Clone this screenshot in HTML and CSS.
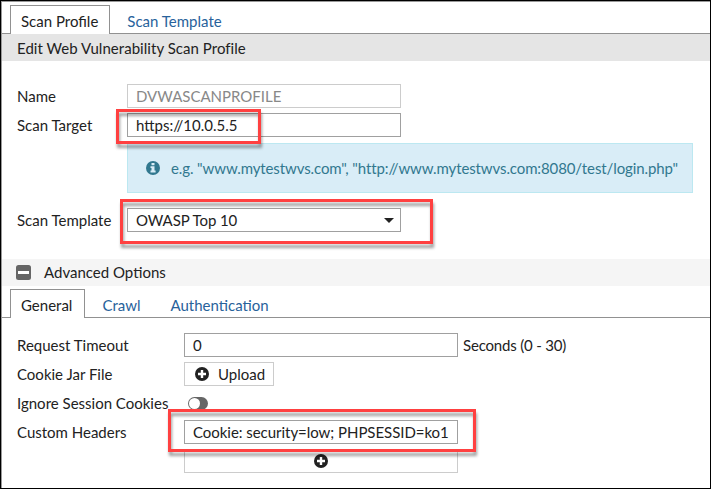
FILE: index.html
```html
<!DOCTYPE html>
<html lang="en">
<head>
<meta charset="utf-8">
<title>Edit Web Vulnerability Scan Profile</title>
<link rel="stylesheet" href="styles.css">
</head>
<body>
<main class="page">
  <nav class="tabs tabs-main">
    <a class="tab active">Scan Profile</a>
    <a class="tab">Scan Template</a>
  </nav>
  <h1 class="band title">Edit Web Vulnerability Scan Profile</h1>
  <section class="form profile">
    <div class="row"><label>Name</label><div class="field disabled">DVWASCANPROFILE</div></div>
    <div class="row"><label>Scan Target</label><div class="field">https://10.0.5.5</div><span class="mark mark-target"></span></div>
    <div class="hint">
      <svg class="icon" viewBox="0 0 14 14"><circle cx="7" cy="7" r="7" fill="#31788f"/><path d="M5.5 2h3v2.2h-3zM4.5 5.3h4v4.3h1.1v1.8H4.5V9.6h1V7.1h-1z" fill="#d9edf7"/></svg>
      <span>e.g. "www.mytestwvs.com", "http://www.mytestwvs.com:8080/test/login.php"</span>
    </div>
    <div class="row"><label>Scan Template</label><div class="field select">OWASP Top 10<i class="caret"></i></div><span class="mark mark-template"></span></div>
  </section>
  <h2 class="band advanced">
    <svg viewBox="0 0 15 15"><rect width="15" height="15" rx="2.5" fill="#666"/><path d="M2 6h11v3H2z" fill="#fff"/></svg>
    Advanced Options
  </h2>
  <nav class="tabs tabs-sub">
    <a class="tab active">General</a>
    <a class="tab">Crawl</a>
    <a class="tab">Authentication</a>
  </nav>
  <section class="form general">
    <div class="row"><label>Request Timeout</label><div class="field">0</div><span class="unit">Seconds (0 - 30)</span></div>
    <div class="row"><label>Cookie Jar File</label><div class="button upload"><svg class="icon" viewBox="0 0 14 14"><circle cx="7" cy="7" r="7" fill="#222"/><path d="M5.8 3h2.4v2.8H11v2.4H8.2V11H5.8V8.2H3V5.8h2.8z" fill="#fff"/></svg>Upload</div></div>
    <div class="row"><label>Ignore Session Cookies</label><svg class="toggle" viewBox="0 0 20 13"><rect width="20" height="13" rx="6.5" fill="#666"/><circle cx="6.5" cy="6.5" r="5.5" fill="#fff"/></svg></div>
    <div class="row"><label>Custom Headers</label><div class="field cookie">Cookie: security=low; PHPSESSID=ko1</div><span class="mark mark-headers"></span></div>
    <div class="row"><label></label><div class="button add"><svg class="icon" viewBox="0 0 14 14"><circle cx="7" cy="7" r="7" fill="#222"/><path d="M5.8 3h2.4v2.8H11v2.4H8.2V11H5.8V8.2H3V5.8h2.8z" fill="#fff"/></svg></div></div>
  </section>
</main>
</body>
</html>
```
FILE: styles.css
```css
* { box-sizing: border-box; }
body { margin: 0; font: 15px/24px Lato, "Liberation Sans", sans-serif; color: #222; }
.page { height: 489px; border: 1px solid #000; box-shadow: inset 1px 1px #999; padding: 1px 0 0 1px; overflow: hidden; background: #fff; }
.tabs { display: flex; align-items: flex-end; padding-left: 8px; border-bottom: 1px solid #919191; }
.tabs-main { height: 32px; }
.tabs-sub { height: 32px; }
.tab { height: 28px; padding: 3px 11px 0 10px; border: 1px solid transparent; border-bottom: 0; color: #28629b; white-space: nowrap; margin-right: 6px; }
.tabs-sub .tab { padding-right: 12px; }
.tab.active { height: 29px; margin-bottom: -1px; border-color: #919191; background: #fff; color: #222; }
.band { margin: 0; font-size: 15px; font-weight: 400; line-height: 27px; height: 27px; padding-left: 15px; }
.title { background: #e5e5e5; padding-top: 1px; letter-spacing: 0.04px; }
.advanced { display: flex; align-items: center; background: #f5f5f5; gap: 13px; padding-left: 14px; margin-top: 27px; }
.advanced svg { width: 15px; height: 15px; }
.form { display: flex; flex-direction: column; gap: 5px; padding-left: 15px; }
.profile { padding-top: 23px; }
.general { padding-top: 15px; }
.row { display: flex; height: 24px; position: relative; white-space: nowrap; }
.row label { width: 110px; flex: none; }
.general label { width: 167px; }
.field { width: 274px; height: 24px; border: 1px solid #a0a0a0; padding-left: 8px; line-height: 22px; background: #fff; overflow: hidden; }
.disabled { border-color: #ccc; color: #888; }
.select { display: flex; align-items: center; justify-content: space-between; padding-right: 6px; letter-spacing: -0.08px; }
.cookie { letter-spacing: -0.04px; }
.caret { border: 5px solid transparent; border-top-color: #222; border-bottom: 0; }
.hint { display: flex; align-items: center; gap: 11px; margin: 1px 0 10px 110px; width: 566px; height: 50px; padding-left: 18px; border: 1px solid #bce8f1; background: #d9edf7; color: #31788f; white-space: nowrap; letter-spacing: -0.11px; }
.icon { width: 14px; height: 14px; flex: none; }
.unit { margin-left: 5px; letter-spacing: -0.18px; }
.button { display: flex; align-items: center; border: 1px solid #ccc; height: 24px; }
.upload { width: 90px; padding-left: 10px; gap: 9px; }
.add { width: 274px; justify-content: center; }
.toggle { width: 20px; height: 13px; margin: 6px 0 0 4px; }
.mark { position: absolute; z-index: 2; border: 3px solid #ff4040; filter: drop-shadow(1px 4px 1.5px rgba(0,0,0,.38)); }
.mark-target { left: 99px; top: -4px; width: 145px; height: 35px; }
.mark-template { left: 103px; top: -9px; width: 313px; height: 45px; }
.mark-headers { left: 151px; top: -11px; width: 308px; height: 43px; }
```
